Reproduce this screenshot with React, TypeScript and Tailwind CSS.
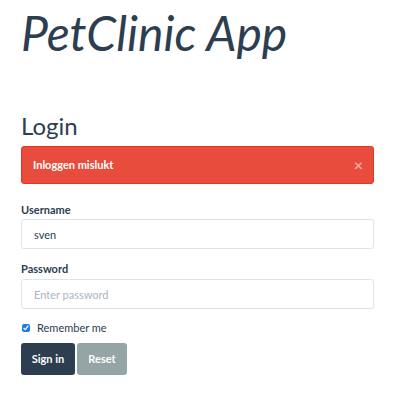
export default function App() {
  return (
    <div className="min-h-[403px] bg-white pl-[21px] pr-[26px] text-[#2c3e50]" style={{ fontFamily: 'Lato, "Open Sans", sans-serif' }}>
      <h1 className="pt-[5px] text-[48px] italic leading-[56px] font-normal">PetClinic App</h1>
      <h3 className="mt-[51px] text-[24px] leading-[28px] font-normal">Login</h3>
      <div className="mt-[6px] flex h-[38px] items-center justify-between rounded-[3px] border border-[#e43725] bg-[#e74c3c] pl-[11px] pr-[10px] text-white">
        <span className="text-[11px] font-bold">Inloggen mislukt</span>
        <span className="text-[16px] font-bold leading-none text-[#f4a79f]">×</span>
      </div>
      <form className="mt-[19px]">
        <label className="block text-[11px] font-bold leading-[13px]">Username</label>
        <input
          type="text"
          defaultValue="sven"
          className="mt-[3px] block h-[30px] w-full rounded-[3px] border border-[#dce4ec] px-[12px] text-[11px] text-[#2c3e50] outline-none"
        />
        <label className="mt-[13px] block text-[11px] font-bold leading-[13px]">Password</label>
        <input
          type="password"
          placeholder="Enter password"
          className="mt-[4px] block h-[30px] w-full rounded-[3px] border border-[#dce4ec] px-[12px] text-[11px] text-[#2c3e50] outline-none placeholder:text-[#acb6c0]"
        />
        <label className="mt-[12px] flex h-[13px] items-center gap-[7px] pl-[1px] text-[11px] leading-[13px]">
          <input type="checkbox" defaultChecked className="h-[8px] w-[8px] accent-[#1e7be3]" />
          Remember me
        </label>
        <div className="mt-[9px] flex gap-[2px]">
          <button type="button" className="h-[32px] w-[54px] rounded-[3px] bg-[#2c3e50] text-[11px] font-bold text-white">Sign in</button>
          <button type="button" className="h-[32px] w-[50px] rounded-[3px] bg-[#95a5a6] text-[11px] font-bold text-white">Reset</button>
        </div>
      </form>
    </div>
  )
}
